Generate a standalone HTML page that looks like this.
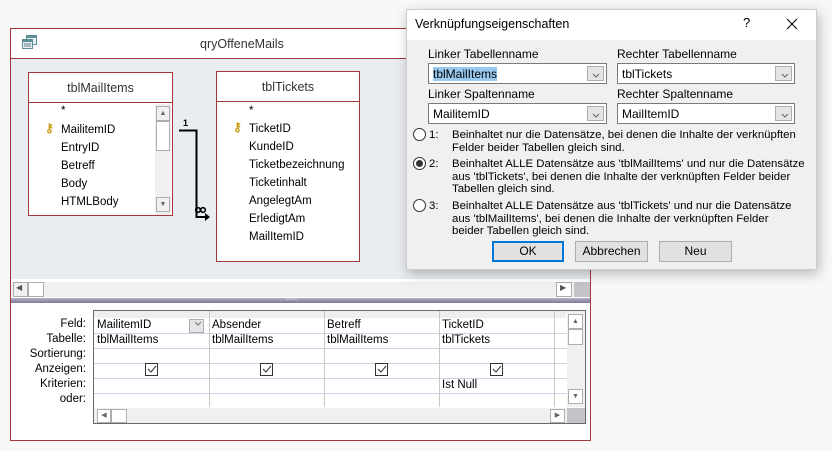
<!DOCTYPE html>
<html><head><meta charset="utf-8"><style>
*{margin:0;padding:0;box-sizing:border-box}
body{width:832px;height:451px;background:#f8f8f8;position:relative;overflow:hidden;font-family:"Liberation Sans",sans-serif;font-size:11.5px;color:#000}
.a{position:absolute}
.t{position:absolute;white-space:nowrap}
.fl{position:absolute;background:#fff;border:1px solid #a4373a}
.fl .h{position:absolute;left:0;right:0;top:0;height:30px;border-bottom:1px solid #a4373a;text-align:center;line-height:30px;font-size:12.5px;color:#333}
.sb{position:absolute;background:#f0f0f0}
.btn{position:absolute;border:1px solid #adadad;background:#e1e1e1;text-align:center;line-height:19px;font-size:12px}
.cb{position:absolute;background:#fff;border:1px solid #7a7a7a;height:21px}
.cb .dd{position:absolute;right:2px;top:2px;width:17px;height:15px;border:1px solid #adadad;background:#e5e5e5}
.cb span{position:absolute;left:4px;top:3px;font-size:12px}
.radio{position:absolute;width:13px;height:13px;border:1px solid #333;border-radius:50%;background:#fff}
.lbl{position:absolute;font-size:12px;white-space:nowrap}
.rt{font-size:11.4px}
.chk{position:absolute;width:13px;height:13px;border:1px solid #333;background:#fff}
.rl{position:absolute;left:0;right:0;height:1px;background:#c9d4e4}
.cl{position:absolute;top:0;bottom:0;width:1px;background:#c9c9c9}
.key{position:absolute;color:#c89a10;font-size:12px;font-weight:bold}
</style></head><body>
<!-- query window -->
<div class="a" style="left:10px;top:28px;width:581px;height:413px;background:#fff;border:1px solid #a4373a"></div>
<div class="a" style="left:11px;top:58px;width:579px;height:1px;background:#a4373a"></div>
<svg class="a" style="left:21px;top:34px" width="18" height="16"><rect x="5" y="1" width="11" height="10" fill="#5a8f95"/><rect x="6" y="4" width="9" height="6" fill="#e8eef2"/><rect x="1" y="5" width="11" height="10" fill="#5a8f95"/><rect x="2" y="8" width="9" height="6" fill="#e8eef2"/><path d="M3 10h7M3 12h7" stroke="#6a7f95"/></svg>
<div class="t" style="left:200px;top:37px;font-size:12.5px;color:#333">qryOffeneMails</div>
<div class="a" style="left:11px;top:59px;width:563px;height:220px;background:#e9ecf0"></div>
<div class="sb" style="left:574px;top:59px;width:16px;height:221px;background:#e9ecf0"></div>
<div class="a" style="left:11px;top:279px;width:579px;height:3px;background:#fff"></div>
<div class="sb" style="left:11px;top:282px;width:563px;height:15px"></div>
<div class="a" style="left:13px;top:282px;width:15px;height:15px;border:1px solid #adadad;background:#f0f0f0"></div>
<div class="a" style="left:28px;top:282px;width:16px;height:15px;border:1px solid #adadad;background:#fff"></div>
<div class="t" style="left:16px;top:283px;font-size:8px;color:#555">◀</div>
<div class="a" style="left:556px;top:282px;width:16px;height:15px;border:1px solid #adadad;background:#fff"></div>
<div class="t" style="left:560px;top:283px;font-size:8px;color:#555">▶</div>
<div class="a" style="left:574px;top:282px;width:16px;height:15px;background:#c4c4c8"></div>
<div class="a" style="left:11px;top:298px;width:579px;height:5px;background:linear-gradient(#b0b0c8,#807a98)"></div>
<div class="t" style="left:285px;top:296px;font-size:7px;color:#fff;letter-spacing:-1px">·········</div>

<!-- tblMailItems -->
<div class="fl" style="left:28px;top:72px;width:145px;height:144px">
<div class="h">tblMailItems</div>
<div class="sb" style="left:126px;top:31px;width:16px;height:111px"></div>
<div class="a" style="left:127px;top:33px;width:14px;height:15px;border:1px solid #adadad;background:#f0f0f0;font-size:7px;color:#666;text-align:center;line-height:13px">▲</div>
<div class="a" style="left:127px;top:48px;width:14px;height:30px;border:1px solid #adadad;background:#fff"></div>
<div class="a" style="left:127px;top:124px;width:14px;height:15px;border:1px solid #adadad;background:#f0f0f0;font-size:7px;color:#666;text-align:center;line-height:13px">▼</div>
</div>
<div class="t" style="left:61px;top:105px">*</div>
<div class="key" style="left:45px;top:121px">⚷</div>
<div class="t" style="left:61px;top:124px">MailitemID</div>
<div class="t" style="left:61px;top:142px">EntryID</div>
<div class="t" style="left:61px;top:160px">Betreff</div>
<div class="t" style="left:61px;top:178px">Body</div>
<div class="t" style="left:61px;top:196px">HTMLBody</div>

<!-- tblTickets -->
<div class="fl" style="left:216px;top:71px;width:144px;height:191px"><div class="h">tblTickets</div></div>
<div class="t" style="left:249px;top:105px">*</div>
<div class="key" style="left:233px;top:120px">⚷</div>
<div class="t" style="left:249px;top:123px">TicketID</div>
<div class="t" style="left:249px;top:141px">KundeID</div>
<div class="t" style="left:249px;top:159px">Ticketbezeichnung</div>
<div class="t" style="left:249px;top:177px">Ticketinhalt</div>
<div class="t" style="left:249px;top:195px">AngelegtAm</div>
<div class="t" style="left:249px;top:213px">ErledigtAm</div>
<div class="t" style="left:249px;top:231px">MailItemID</div>

<!-- relationship -->
<svg class="a" style="left:175px;top:115px" width="40" height="130"><path d="M4 15.5h17.5V102H34" stroke="#000" stroke-width="2" fill="none"/><path d="M30 98l5 4-5 4z" fill="#000"/><text x="8" y="11" font-size="9" font-weight="bold" font-family="Liberation Sans">1</text><g fill="none" stroke="#000" stroke-width="1.6"><circle cx="23" cy="95" r="2.3"/><circle cx="28" cy="95" r="2.3"/></g></svg>

<!-- grid -->
<div class="t" style="left:40px;top:318px;width:46px;text-align:right">Feld:</div>
<div class="t" style="left:30px;top:333px;width:56px;text-align:right">Tabelle:</div>
<div class="t" style="left:20px;top:348px;width:66px;text-align:right">Sortierung:</div>
<div class="t" style="left:20px;top:363px;width:66px;text-align:right">Anzeigen:</div>
<div class="t" style="left:20px;top:378px;width:66px;text-align:right">Kriterien:</div>
<div class="t" style="left:20px;top:393px;width:66px;text-align:right">oder:</div>
<div class="a" style="left:93px;top:310px;width:493px;height:114px;border:1px solid #6a6a6a;background:#fff;overflow:hidden">
<div class="a" style="left:0;top:0;width:472px;height:7px;background:#eee"></div>
<div class="rl" style="top:22px;right:18px"></div><div class="rl" style="top:37px;right:18px"></div><div class="rl" style="top:52px;right:18px"></div><div class="rl" style="top:67px;right:18px"></div><div class="rl" style="top:82px;right:18px"></div>
<div class="cl" style="left:115px;bottom:16px"></div><div class="cl" style="left:230px;bottom:16px"></div><div class="cl" style="left:345px;bottom:16px"></div><div class="cl" style="left:460px;bottom:16px"></div>
<div class="a" style="left:95px;top:8px;width:15px;height:14px;border:1px solid #adadad;background:#e5e5e5"></div>
<div class="sb" style="left:473px;top:0;width:18px;height:96px"></div>
<div class="a" style="left:474px;top:3px;width:15px;height:15px;border:1px solid #adadad;background:#fff;font-size:7px;color:#666;text-align:center;line-height:13px">▲</div>
<div class="a" style="left:474px;top:18px;width:15px;height:16px;border:1px solid #adadad;background:#fff"></div>
<div class="a" style="left:474px;top:78px;width:15px;height:15px;border:1px solid #adadad;background:#fff;font-size:7px;color:#666;text-align:center;line-height:13px">▼</div>
<div class="sb" style="left:0;top:97px;width:473px;height:16px"></div>
<div class="a" style="left:3px;top:98px;width:14px;height:14px;border:1px solid #adadad;background:#fff;font-size:7px;color:#666;text-align:center;line-height:12px">◀</div>
<div class="a" style="left:17px;top:98px;width:16px;height:14px;border:1px solid #adadad;background:#fff"></div>
<div class="a" style="left:456px;top:98px;width:15px;height:14px;border:1px solid #adadad;background:#fff;font-size:7px;color:#666;text-align:center;line-height:12px">▶</div>
<div class="a" style="left:473px;top:97px;width:18px;height:16px;background:#c4c4c8"></div>
</div>
<div class="t" style="left:97px;top:319px">MailitemID</div><div class="t" style="left:212px;top:319px">Absender</div><div class="t" style="left:327px;top:319px">Betreff</div><div class="t" style="left:442px;top:319px">TicketID</div>
<div class="t" style="left:97px;top:334px">tblMailItems</div><div class="t" style="left:212px;top:334px">tblMailItems</div><div class="t" style="left:327px;top:334px">tblMailItems</div><div class="t" style="left:442px;top:334px">tblTickets</div>
<div class="t" style="left:442px;top:379px">Ist Null</div>
<svg class="a" style="left:0;top:0" width="832" height="451"><g fill="#fff" stroke="#333"><rect x="145.5" y="363.5" width="12" height="12"/><rect x="260.5" y="363.5" width="12" height="12"/><rect x="375.5" y="363.5" width="12" height="12"/><rect x="490.5" y="363.5" width="12" height="12"/></g><g fill="none" stroke="#333"><path d="M148 369l3 3 5-6M263 369l3 3 5-6M378 369l3 3 5-6M493 369l3 3 5-6"/><path d="M195 322l3 3 3-3" stroke="#777"/></g></svg>

<!-- dialog -->
<div class="a" style="left:406px;top:9px;width:411px;height:261px;background:#f0f0f0;border:1px solid #ccc;box-shadow:2px 4px 12px rgba(0,0,0,0.25)"></div>
<div class="a" style="left:407px;top:10px;width:409px;height:30px;background:#fff"></div>
<div class="t" style="left:415px;top:17px;font-size:12.5px">Verknüpfungseigenschaften</div>
<div class="t" style="left:743px;top:15px;font-size:13px">?</div>
<svg class="a" style="left:786px;top:18px" width="12" height="12"><path d="M1 1l10 10M11 1L1 11" stroke="#000" stroke-width="1.1"/></svg>
<div class="lbl" style="left:428px;top:47px">Linker Tabellenname</div>
<div class="lbl" style="left:617px;top:47px">Rechter Tabellenname</div>
<div class="cb" style="left:428px;top:63px;width:179px"><span style="background:#99c9ef">tblMailItems</span><div class="dd"></div></div>
<div class="cb" style="left:617px;top:63px;width:178px"><span>tblTickets</span><div class="dd"></div></div>
<div class="lbl" style="left:428px;top:87px">Linker Spaltenname</div>
<div class="lbl" style="left:617px;top:87px">Rechter Spaltenname</div>
<div class="cb" style="left:428px;top:103px;width:179px"><span>MailitemID</span><div class="dd"></div></div>
<div class="cb" style="left:617px;top:103px;width:178px"><span>MailItemID</span><div class="dd"></div></div>
<svg class="a" style="left:0;top:0" width="832" height="451"><g fill="none" stroke="#666"><path d="M593 74l3 3 3-3M782 74l3 3 3-3M593 114l3 3 3-3M782 114l3 3 3-3"/></g></svg>
<div class="radio" style="left:413px;top:128px"></div>
<div class="radio" style="left:413px;top:157px"></div><div class="a" style="left:416px;top:160px;width:7px;height:7px;border-radius:50%;background:#333"></div>
<div class="radio" style="left:413px;top:199px"></div>
<div class="lbl rt" style="left:429px;top:129px">1:</div>
<div class="lbl rt" style="left:429px;top:158px">2:</div>
<div class="lbl rt" style="left:429px;top:200px">3:</div>
<div class="lbl rt" style="left:452px;top:129px;line-height:12.5px">Beinhaltet nur die Datensätze, bei denen die Inhalte der verknüpften<br>Felder beider Tabellen gleich sind.</div>
<div class="lbl rt" style="left:452px;top:158px;line-height:12.5px">Beinhaltet ALLE Datensätze aus 'tblMailItems' und nur die Datensätze<br>aus 'tblTickets', bei denen die Inhalte der verknüpften Felder beider<br>Tabellen gleich sind.</div>
<div class="lbl rt" style="left:452px;top:200px;line-height:12.5px">Beinhaltet ALLE Datensätze aus 'tblTickets' und nur die Datensätze<br>aus 'tblMailItems', bei denen die Inhalte der verknüpften Felder<br>beider Tabellen gleich sind.</div>
<div class="btn" style="left:492px;top:241px;width:72px;height:21px;border:2px solid #0078d7;line-height:17px">OK</div>
<div class="btn" style="left:575px;top:241px;width:73px;height:21px">Abbrechen</div>
<div class="btn" style="left:659px;top:241px;width:73px;height:21px">Neu</div>
</body></html>
